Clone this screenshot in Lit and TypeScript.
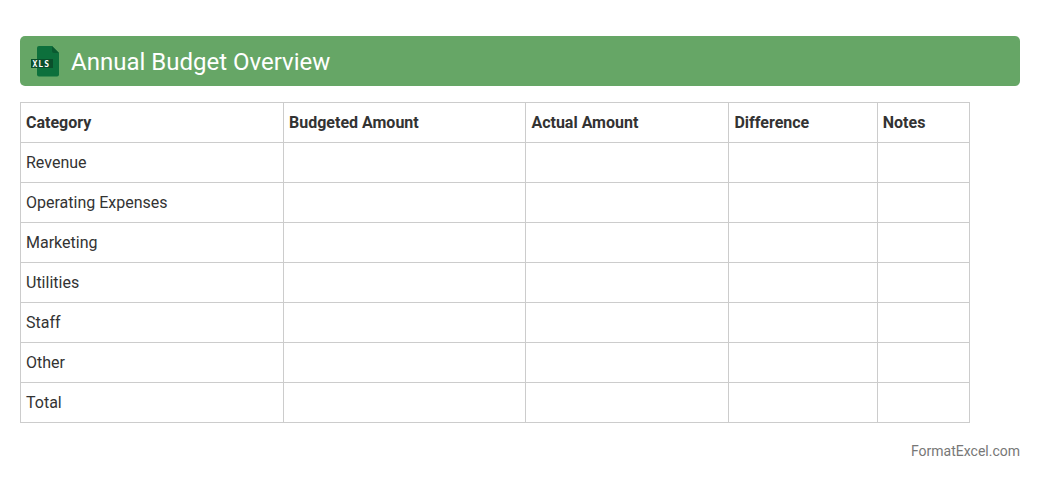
import { LitElement, html, css } from "lit";
import { customElement } from "lit/decorators.js";

const rows = ["Revenue", "Operating Expenses", "Marketing", "Utilities", "Staff", "Other", "Total"];
const heads = ["Category", "Budgeted Amount", "Actual Amount", "Difference", "Notes"];

@customElement("app-root")
export class AppRoot extends LitElement {
  static styles = css`
    :host {
      display: block;
      box-sizing: border-box;
      width: 1040px;
      height: 480px;
      padding: 36px 20px 0;
      background: #fff;
      font-family: Roboto, sans-serif;
      color: #333;
      font-size: 16px;
    }
    .header {
      display: flex;
      align-items: center;
      gap: 9px;
      height: 50px;
      padding-left: 10px;
      box-sizing: border-box;
      background: #66a666;
      border-radius: 5px;
      color: #fff;
      font-size: 24px;
      margin-bottom: 16px;
    }
    .title { line-height: 48px; padding-top: 2px; }
    .icon { display: block; width: 32px; height: 32px; flex: none; }
    .icon text { font-family: "DejaVu Sans Mono", monospace; font-size: 8px; font-weight: 700; letter-spacing: 1px; fill: #fff; }
    table {
      border-collapse: collapse;
      table-layout: fixed;
      width: 949px;
    }
    th, td {
      border: 1px solid #ccc;
      height: 40px;
      box-sizing: border-box;
      padding: 0 5px;
      text-align: left;
      line-height: 19px;
    }
    th { font-weight: 700; }
    .c1 { width: 263px; }
    .c2 { width: 242.4px; }
    .c3 { width: 203px; }
    .c4 { width: 148.4px; }
    .c5 { width: 92.2px; }
    .foot {
      margin-top: 19px;
      text-align: right;
      font-size: 14px;
      line-height: 18px;
      color: #777;
    }
  `;

  render() {
    return html`
      <div class="header">
        <svg class="icon" viewBox="0 0 32 32" aria-hidden="true">
          <path d="M9 1h13l7 7v21.5a2 2 0 0 1-2 2H9a2 2 0 0 1-2-2V3a2 2 0 0 1 2-2z" fill="#0d703c"/>
          <path d="M22 1v5a2 2 0 0 0 2 2h5z" fill="#0a5a30"/>
          <rect x="1" y="14" width="22" height="9" fill="#0a4f2b"/>
          <text x="2.5" y="21.5">XLS</text>
        </svg>
        <span class="title">Annual Budget Overview</span>
      </div>
      <table>
        <colgroup>
          <col class="c1" /><col class="c2" /><col class="c3" /><col class="c4" /><col class="c5" />
        </colgroup>
        <thead>
          <tr>${heads.map((h) => html`<th>${h}</th>`)}</tr>
        </thead>
        <tbody>
          ${rows.map((r) => html`<tr><td>${r}</td><td></td><td></td><td></td><td></td></tr>`)}
        </tbody>
      </table>
      <div class="foot">FormatExcel.com</div>
    `;
  }
}
